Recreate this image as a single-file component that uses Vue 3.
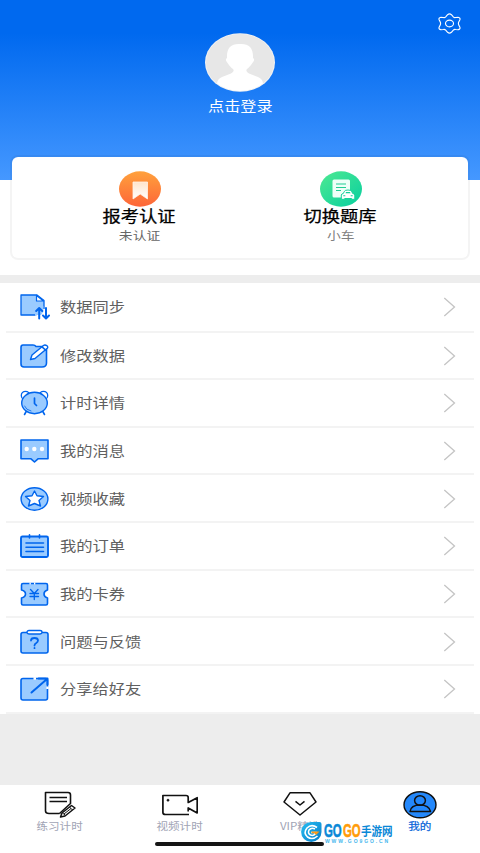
<script setup>
const rows = [
  { icon: 'sync', label: '数据同步' },
  { icon: 'edit', label: '修改数据' },
  { icon: 'clock', label: '计时详情' },
  { icon: 'message', label: '我的消息' },
  { icon: 'star', label: '视频收藏' },
  { icon: 'order', label: '我的订单' },
  { icon: 'coupon', label: '我的卡券' },
  { icon: 'help', label: '问题与反馈' },
  { icon: 'share', label: '分享给好友' },
]
</script>

<template>
  <main class="page">
    <div class="top">
      <header class="hero">
        <svg class="gear" viewBox="0 0 24 22" fill="none" stroke="#fff" stroke-width="1.2" stroke-linejoin="round">
          <path d="M10 1.8Q12 .2 14 1.8L16 4Q17 5 18.4 4.7L21 4.5Q23.5 5 22.9 7L21.7 9.5Q21 11 21.7 12.5L22.9 15Q23.5 17 21 17.5L18.4 17.3Q17 17 16 18L14 20.2Q12 21.8 10 20.2L8 18Q7 17 5.6 17.3L3 17.5Q.5 17 1.1 15L2.3 12.5Q3 11 2.3 9.5L1.1 7Q.5 5 3 4.5L5.6 4.7Q7 5 8 4Z" />
          <ellipse cx="12" cy="11" rx="4.2" ry="3.5" />
        </svg>
        <svg class="avatar" viewBox="0 0 70 59">
          <defs><clipPath id="face"><ellipse cx="35" cy="29.5" rx="34" ry="28.5" /></clipPath></defs>
          <ellipse cx="35" cy="29.5" rx="35" ry="29.3" fill="#f3f3f3" />
          <ellipse cx="35" cy="29.5" rx="34" ry="28.5" fill="#e7e7e7" />
          <path clip-path="url(#face)" fill="#fff" d="M35 11C44 10.500 48.500 15 48 25Q50 26 48.500 28.500C47 30 46 33 42 36Q40 38.500 44 40.500L53 44Q58 46 58 51V59H12V51Q12 46 17 44L26 40.500Q30 38.500 28 36C24 33 23 30 21.500 28.500Q20 26 22 25C21.500 15 26 10.500 35 11Z" />
        </svg>
        <div class="login"><span class="wide">点击登录</span></div>
      </header>

      <section class="card">
        <div class="entry">
          <svg class="badge" viewBox="0 0 42 36">
            <defs>
              <linearGradient id="orange" x2="0" y2="1"><stop stop-color="#ffa13c" /><stop offset="1" stop-color="#fd6639" /></linearGradient>
              <linearGradient id="cream" x2="0" y2="1"><stop stop-color="#ffe4cc" /><stop offset="1" stop-color="#fff" /></linearGradient>
            </defs>
            <ellipse cx="21" cy="18" rx="21" ry="17.700" fill="url(#orange)" />
            <path d="M14 11H28.500V28L21.200 23L14 28Z" fill="url(#cream)" stroke="#fff3e8" stroke-width=".8" />
          </svg>
          <div class="title"><span class="wide">报考认证</span></div>
          <div class="sub"><span class="wide">未认证</span></div>
        </div>
        <div class="entry">
          <svg class="badge" viewBox="0 0 42 36">
            <defs><linearGradient id="green" x2="1" y2="1"><stop stop-color="#4ee992" /><stop offset="1" stop-color="#08cf9f" /></linearGradient></defs>
            <ellipse cx="21" cy="18" rx="21" ry="17.700" fill="url(#green)" />
            <rect x="12.500" y="8.500" width="17.500" height="18" rx="1.500" fill="#effff8" />
            <path d="M16 13H26M16 16.500H26M16 19.500H21" stroke="#22ce94" stroke-width="1.200" />
            <path d="M21.300 24Q21.500 22.800 23.300 22.500L24.300 20.500Q25 19 28 19Q31 19 31.700 20.500L32.700 22.500Q34.700 22.800 34.800 24V28.300H31.500V27.500H24.700V28.300H21.300Z" fill="#fff" stroke="#15d19b" stroke-width="1" />
            <path d="M25.500 22.300L26 21H30L30.500 22.300Z" fill="#15d19b" />
            <path d="M23.300 24.800H25.300M30.700 24.800H32.700" stroke="#15d19b" stroke-width="1.100" />
          </svg>
          <div class="title"><span class="wide">切换题库</span></div>
          <div class="sub light"><span class="wide">小车</span></div>
        </div>
      </section>
    </div>

    <ul class="list">
      <li v-for="row in rows" :key="row.icon" class="row">
        <svg class="icon" viewBox="0 0 30 26" fill="#9acbff" stroke="#0065ed" stroke-width="1.600" stroke-linecap="round" stroke-linejoin="round">
          <template v-if="row.icon === 'sync'">
            <path d="M1 1H17L24 6.500V21H1Z" stroke-width="1.300" />
            <path d="M16.500 1.500V7H23.500Z" fill="#fff" stroke-width="1.200" />
            <path d="M15 15H29V26H16.500V21.500H15Z" fill="#fff" stroke="none" />
            <path d="M15 12H23.300V18L21 21H15Z" stroke="none" />
            <path d="M19.200 24.500V14.500M16.200 17L19.200 14L22.200 17M26 14V24M23 21.500L26 24.500L29 21.500" fill="none" stroke-width="2" />
          </template>
          <template v-else-if="row.icon === 'edit'">
            <path d="M3 2H13Q15 2 16 3.500H24Q26.500 4 26.500 6V20Q26.500 24 22 24H4Q1 24 1 21V4.500Q1 2 3 2Z" />
            <path d="M10.500 16.500L12 12L23.500 2.500Q25 1.300 27 2.800Q28.500 4.200 27 5.500L15 15.500Z" fill="#fff" stroke-width="1.400" />
            <path d="M22 3.800L25.500 7" />
          </template>
          <template v-else-if="row.icon === 'clock'">
            <path d="M6.500 21L4.500 24.500M22.500 21L24.500 24.500" />
            <circle cx="5.500" cy="5.500" r="4.200" fill="#fff" stroke-width="1.300" /><circle cx="23.500" cy="5.500" r="4.200" fill="#fff" stroke-width="1.300" />
            <ellipse cx="14.500" cy="13" rx="12.800" ry="10.700" stroke-width="1.400" />
            <path d="M14.500 8V13.500L16.500 15.500" fill="none" stroke-width="1.700" />
            <path d="M4.500 16Q6 20 11 21" fill="none" stroke-width=".8" />
          </template>
          <template v-else-if="row.icon === 'message'">
            <path d="M1 2H28V20.800H18L14.500 24L11 20.800H1Z" />
            <g fill="#fff" stroke="none"><circle cx="6.700" cy="11" r="2.200" /><circle cx="14.300" cy="11" r="2.200" /><circle cx="22" cy="11" r="2.200" /></g>
          </template>
          <template v-else-if="row.icon === 'star'">
            <ellipse cx="14.500" cy="13" rx="13.400" ry="11.200" stroke-width="1.400" />
            <path d="M14.500 5L17 9.800L23.500 10.500L19 14.500L20.500 20L14.500 17.500L8.500 20L10 14.500L5.500 10.500L12 9.800Z" fill="#fff" stroke-width="1.400" />
          </template>
          <template v-else-if="row.icon === 'order'">
            <rect x="1" y="3.500" width="27" height="20.500" rx="1.500" stroke-width="1.900" />
            <path d="M9.500 1.800V5M19.500 1.800V5M6 10H23.500M6 14.200H23.500M6 18.500H23.500" fill="none" />
          </template>
          <template v-else-if="row.icon === 'coupon'">
            <path d="M3 2.500H26Q27.500 2.500 27.500 4V9Q24 10 24 13Q24 16 27.500 17V22.500Q27.500 24 26 24H3Q1.500 24 1.500 22.500V17Q5.500 16 5.500 13Q5.500 10 1.500 9V4Q1.500 2.500 3 2.500Z" />
            <path d="M9.500 2.500H10.800M14 2.500H15.300" stroke="#fff" stroke-width="2.200" stroke-linecap="butt" />
            <path d="M10.500 8.500L14.300 12.500L18 8.500M10 12.500H18.500M10 15.500H18.500M14.300 12.500V18.500" fill="none" stroke-width="1.300" />
          </template>
          <template v-else-if="row.icon === 'help'">
            <rect x="1" y="3.500" width="27" height="20.500" rx="2" />
            <path d="M9 1.500H20Q22 1.500 22 3.200Q22 4.900 20 5H9Q7 4.900 7 3.200Q7 1.500 9 1.500Z" fill="#fff" stroke-width="1.300" />
            <path d="M11 11.500Q11 9 14.500 9Q18 9 18 11.500Q18 13 16 14.200Q14.500 15 14.500 16.500M14.500 19V19.200" fill="none" stroke-width="1.800" />
          </template>
          <template v-else>
            <rect x="1" y="2.500" width="26.500" height="21.500" rx="2" />
            <path d="M13.500 2.500H16M27.500 10.500V13" stroke="#fff" stroke-width="2.400" stroke-linecap="butt" />
            <path d="M11.500 16.500L27 3M18.500 2.500H27.500V8.500" fill="none" stroke-width="2" />
          </template>
        </svg>
        <span class="wide label">{{ row.label }}</span>
        <svg class="chevron" viewBox="0 0 12 20" fill="none" stroke="#c4c4c4" stroke-width="1.300"><path d="M.8 1L11 10L.8 19" /></svg>
      </li>
    </ul>

    <nav class="tabs">
      <div class="tab">
        <svg viewBox="0 0 36 30" fill="none" stroke="#111" stroke-width="1.600" stroke-linejoin="round">
          <path d="M17.500 24.500H7Q3.500 24.500 3.500 22V3.500H26Q28.500 3.500 28.500 6V14.500L17.500 24.500" />
          <path d="M7.500 8.500H25M7.500 12.500H25" stroke-width="1.300" />
          <path d="M18.500 28L20 24L29.500 16.500L33 19L23 27Z" fill="#fff" stroke-width="1.500" /><path d="M20.500 24L23 26M27.500 18L30.500 21M22 25L29 19.500" stroke-width="1" />
        </svg>
        <div class="tab-label"><span class="wide">练习计时</span></div>
      </div>
      <div class="tab">
        <svg viewBox="0 0 36 30" fill="none" stroke="#111" stroke-width="1.700" stroke-linejoin="round">
          <path d="M27 25.500H3.500Q.9 25.500 .9 23.500V6.500H24Q26.200 6.500 26.200 8.500V13.500L35.200 8.700V24L26.200 19V22.500" />
          <circle cx="6" cy="11.200" r="1" fill="#111" stroke-width=".8" />
        </svg>
        <div class="tab-label"><span class="wide">视频计时</span></div>
      </div>
      <div class="tab">
        <svg viewBox="0 0 36 30" fill="none" stroke="#111" stroke-width="1.500" stroke-linejoin="round">
          <path d="M8 3.800H28L34 13L18 26L2 13Z" /><path d="M13.500 12.300L18 16L22.500 12.300" />
        </svg>
        <div class="tab-label"><span class="wide">VIP精选</span></div>
      </div>
      <div class="tab active">
        <svg viewBox="0 0 36 30" fill="none" stroke="#111" stroke-width="1.500">
          <ellipse cx="18" cy="15.800" rx="16" ry="13" fill="#2488fb" stroke-width="1.400" />
          <ellipse cx="18" cy="11.500" rx="5.400" ry="4.700" /><path d="M8 22.500Q9 16 18 16Q27 16 28.500 22.500Z" stroke-linejoin="round" />
        </svg>
        <div class="tab-label"><span class="wide">我的</span></div>
      </div>
      <div class="home-bar"></div>
      <div class="mark">
        <svg class="mark-logo" viewBox="0 0 22 22">
          <defs><linearGradient id="logo" x2="1" y2="1"><stop stop-color="#26bff2" /><stop offset="1" stop-color="#087bc9" /></linearGradient></defs>
          <path d="M11 1H19Q21 1 21 3V11A10.200 10 0 1 1 11 1Z" fill="url(#logo)" />
          <path d="M16.500 6.500Q11 2.500 6.500 7Q2.500 12 7 16Q12 19.500 17 15" fill="none" stroke="#fff" stroke-width="1.600" />
          <path d="M14.500 8Q11 6 8.500 9Q7 12.500 10 14Q14 15.500 15.500 11.500H10.500" fill="none" stroke="#fff" stroke-width="1.500" />
          <path d="M11 10.500H19L15.500 14L14 12.300H11Z" fill="#ff9b18" />
        </svg>
        <div class="mark-text">
          <div class="mark-name"><b>GO</b><b class="amber">GO</b><span class="mark-cn">手游网</span></div>
          <div class="mark-url">WWW.GO9GO.CN</div>
        </div>
      </div>
    </nav>
  </main>
</template>

<style>
body { margin: 0; background: #ededed; }
</style>
<style scoped>
.page { width: 480px; height: 853px; display: flex; flex-direction: column; overflow: hidden; background: #ededed; font-family: "Noto Sans CJK SC", sans-serif; }
.wide { display: inline-block; white-space: nowrap; transform: scaleX(1.18); }
.top { flex: none; height: 275px; background: #fff; }
.hero { position: relative; box-sizing: border-box; height: 180px; padding-top: 33px; display: flex; flex-direction: column; align-items: center; background: linear-gradient(#0069ef 0, #0069ef 33px, #4598ff 180px); }
.gear { position: absolute; left: 437px; top: 13px; width: 25px; height: 21px; }
.avatar { width: 70px; height: 59px; }
.login { color: #fff; font-size: 13.700px; line-height: 20px; margin-top: 3px; }
.card { position: relative; box-sizing: border-box; height: 101px; margin: -23px 12px 0; border-radius: 6px; display: flex; padding: 14px 27px 0; background: #fff; box-shadow: 0 0 0 2px rgba(0, 0, 0, .045); }
.entry { width: 201px; display: flex; flex-direction: column; align-items: center; }
.badge { width: 42px; height: 36px; }
.title { color: #000; font-size: 15.500px; line-height: 21px; margin-top: -2px; -webkit-text-stroke: .25px #000; }
.sub { color: #666; font-size: 11.700px; line-height: 17px; }
.sub.light { color: #808080; }
.list { flex: none; list-style: none; margin: 8px 0 0; padding: 0; background: #fff; }
.row { box-sizing: border-box; height: 47.650px; margin: 0 6px; padding: 1px 18px 0 14px; border-bottom: 2px solid #f3f3f3; display: flex; align-items: center; }
.row:first-child { height: 49.500px; }
.icon { width: 30px; height: 26px; flex: none; }
.label { color: #606060; font-size: 13.800px; line-height: 20px; margin: -2px 0 0 10px; transform-origin: left; }
.chevron { width: 13px; height: 20px; margin-left: auto; }
.tabs { position: relative; height: 68px; margin-top: auto; display: flex; background: #fff; flex: none; }
.tab { width: 120px; display: flex; flex-direction: column; align-items: center; padding-top: 4px; }
.tab svg { width: 36px; height: 30px; }
.tab-label { color: #a1a4b5; font-size: 9.800px; line-height: 14px; }
.active .tab-label { color: #0864d9; -webkit-text-stroke: .2px #0864d9; }
.home-bar { position: absolute; left: 155px; top: 57px; width: 169px; height: 4px; border-radius: 2px; background: #151515; }
.mark { position: absolute; left: 300px; top: 36px; display: flex; }
.mark-logo { width: 23px; height: 22px; }
.mark-text { width: 71px; margin: 2px 0 0 1px; }
.mark-name { height: 15px; display: flex; align-items: center; color: #0988d7; font: bold 19px/15px "Liberation Sans", sans-serif; }
.mark-name b { width: 18.500px; transform: scaleX(.6); transform-origin: left; flex: none; -webkit-text-stroke: .6px currentColor; }
.mark-name .amber { color: #ff9c08; }
.mark-cn { font: 700 12px/15px "Noto Sans CJK SC", sans-serif; white-space: nowrap; flex: none; transform: scaleX(.88); transform-origin: left; }
.mark-url { margin: 1px 0 0 1px; color: #45b6ed; font: bold 5px/5px "Liberation Sans", sans-serif; letter-spacing: 1.900px; white-space: nowrap; }
</style>
